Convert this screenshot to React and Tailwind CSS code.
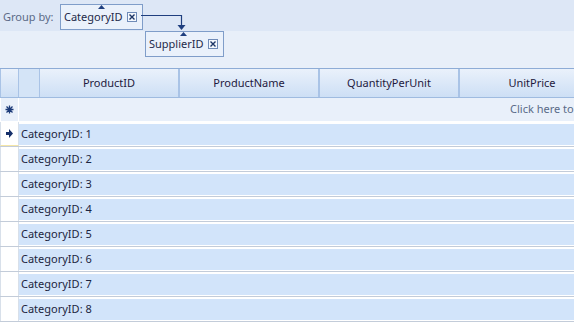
import React from "react";

const columns = [
  { name: "ProductID", width: "w-[140px]" },
  { name: "ProductName", width: "w-[140px]" },
  { name: "QuantityPerUnit", width: "w-[140px]" },
  { name: "UnitPrice", width: "w-[146px]" },
];

const groups = [1, 2, 3, 4, 5, 6, 7, 8];

const CloseBox = () => (
  <span className="flex h-[10px] w-[10px] shrink-0 items-center justify-center border border-[#6f8bb8] bg-[#f4f8fd]">
    <svg width="6" height="6" viewBox="0 0 6 6">
      <path d="M0.5 0.5 L5.5 5.5 M5.5 0.5 L0.5 5.5" stroke="#1c3566" strokeWidth="1.4" />
    </svg>
  </span>
);

const SortUp = () => (
  <svg width="7" height="4" viewBox="0 0 7 4">
    <path d="M3.5 0 L7 4 L0 4 Z" fill="#1f3f7f" />
  </svg>
);

const GroupChip = ({ label, arrowLeft }) => (
  <div className="relative inline-flex h-[26px] w-fit items-center gap-[4px] border border-[#7f9dc9] bg-[#eaf1fb] pl-[3px] pr-[5px] text-[11px] text-[#1d2a4a]">
    <span className={`absolute top-[0px] flex ${arrowLeft}`}>
      <SortUp />
    </span>
    <span>{label}</span>
    <CloseBox />
  </div>
);

export default function App() {
  return (
    <div className="h-[335px] w-[574px] overflow-hidden bg-white font-['Noto_Sans','Liberation_Sans',sans-serif]">
      {/* Group panel */}
      <div className="relative">
        <div className="flex h-[31px] items-start bg-[#dde7f6] pt-[4px]">
          <span className="ml-[3px] mt-[5px] w-[57px] text-[11px] text-[#5b6a87]">Group by:</span>
          <GroupChip label="CategoryID" arrowLeft="left-[37px]" />
        </div>
        <div className="flex h-[37px] items-start bg-[#e8eff9] pl-[145px]">
          <GroupChip label="SupplierID" arrowLeft="left-[34px]" />
        </div>
        <svg className="absolute left-[141px] top-[14px]" width="46" height="18" viewBox="0 0 46 18">
          <path d="M0 1.5 H40.5 V12" stroke="#1f3f7f" strokeWidth="1.2" fill="none" />
          <path d="M36.5 11 L44.5 11 L40.5 16 Z" fill="#1f3f7f" />
        </svg>
      </div>

      {/* Header */}
      <div className="flex h-[30px] w-[606px] border-t border-[#8eacd6] border-b border-b-[#9fbbe0] bg-gradient-to-b from-[#eaf1fb] to-[#cddff5]">
        <div className="w-[19px] shrink-0 border-l border-r border-[#a9c3e6]" />
        <div className="w-[21px] shrink-0 border-r border-[#a9c3e6] bg-[#d4e4f7]" />
        {columns.map((c) => (
          <div
            key={c.name}
            className={`${c.width} flex shrink-0 items-center justify-center border-r-2 border-[#a9c3e6] text-[11px] text-[#1f1a3e]`}
          >
            {c.name}
          </div>
        ))}
      </div>

      {/* New row */}
      <div className="flex h-[24px] border-b border-white bg-[#e9f0fa]">
        <div className="flex w-[19px] shrink-0 items-center justify-center border-l border-r border-white">
          <svg width="9" height="9" viewBox="0 0 9 9">
            <path
              d="M4.5 0.5 V8.5 M0.5 4.5 H8.5 M1.5 1.5 L7.5 7.5 M7.5 1.5 L1.5 7.5"
              stroke="#1c3a78"
              strokeWidth="1.3"
            />
          </svg>
        </div>
        <div className="flex min-w-0 flex-1 items-center pl-[491px] text-[11px] whitespace-nowrap text-[#5a6b88]">
          Click here to
        </div>
      </div>

      {/* Group rows */}
      <div>
        {groups.map((g) => (
          <div key={g} className="flex h-[25px] border-b border-[#c3ccd9]">
            <div
              className={`flex w-[19px] shrink-0 items-center justify-center border-l border-r border-[#d8e0ea] bg-white ${
                g === 1 ? "border-b border-b-[#f5e6a6]" : ""
              }`}
            >
              {g === 1 && (
                <svg width="7" height="9" viewBox="0 0 7 9">
                  <path d="M0 3 H3 V0 L7 4.5 L3 9 V6 H0 Z" fill="#16306a" />
                </svg>
              )}
            </div>
            <div className="flex flex-1 flex-col">
              <div className="h-[2px] bg-white" />
              <div className="flex flex-1 items-center bg-[#d2e4fa] pl-[2px] text-[11px] text-[#1c2440]">
                CategoryID: {g}
              </div>
              <div className="h-[1px] bg-white" />
            </div>
          </div>
        ))}
      </div>
    </div>
  );
}
